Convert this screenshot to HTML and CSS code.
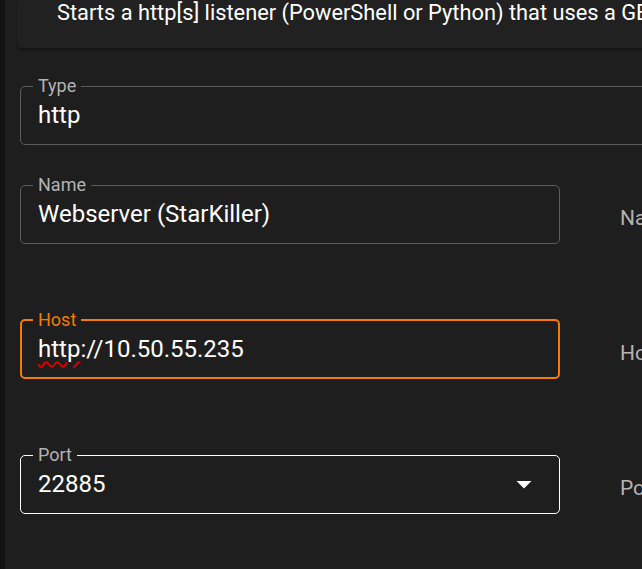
FILE: index.html
```html
<!DOCTYPE html>
<html lang="en">
<head>
<meta charset="utf-8">
<title>Listener</title>
<link rel="stylesheet" href="styles.css">
</head>
<body>
<div class="app">
  <div class="rail"></div>
  <main class="main">
    <div class="card">
      <p class="card-text">Starts a http[s] listener (PowerShell or Python) that uses a GET/POST approach.</p>
    </div>
    <form class="form">
      <fieldset class="field field-wide">
        <legend class="label">Type</legend>
        <div class="value">http</div>
      </fieldset>
      <div class="grid">
        <fieldset class="field">
          <legend class="label">Name</legend>
          <div class="value">Webserver (StarKiller)</div>
        </fieldset>
        <p class="hint">Name for the listener.</p>
        <fieldset class="field field-focus">
          <legend class="label">Host</legend>
          <div class="value"><span class="misspelled">http</span>://10.50.55.235</div>
        </fieldset>
        <p class="hint">Hostname/IP for staging.</p>
        <fieldset class="field field-select">
          <legend class="label">Port</legend>
          <div class="value value-select">
            <span>22885</span>
            <svg class="arrow" viewBox="0 0 24 24" width="36" height="36" aria-hidden="true"><path d="M7 10l5 5 5-5z" fill="#ffffff"/></svg>
          </div>
        </fieldset>
        <p class="hint">Port for the listener.</p>
      </div>
    </form>
  </main>
</div>
</body>
</html>
```
FILE: styles.css
```css
* { box-sizing: border-box; }
html, body {
  margin: 0;
  height: 100%;
}
body {
  background: #1e1e1e;
  color: #ffffff;
  font-family: Roboto, "Liberation Sans", sans-serif;
  overflow: hidden;
}
.app {
  display: flex;
  height: 569px;
}
.rail {
  width: 5px;
  flex: none;
  background: #121212;
}
.main {
  flex: 1;
  min-width: 0;
  overflow: hidden;
}
.card {
  margin-left: 12px;
  width: 900px;
  height: 48px;
  background: #212121;
  border-radius: 0 0 6px 6px;
  box-shadow: 0 2px 3px rgba(0, 0, 0, 0.35);
  padding: 0 0 0 40px;
}
.card-text {
  margin: 0;
  font-size: 21.8px;
  line-height: 26px;
  white-space: nowrap;
  color: #ffffff;
}
.form {
  margin: 29px 0 0 15px;
  width: 900px;
}
.field {
  margin: 0;
  min-width: 0;
  border: 1px solid #5c5c5c;
  border-radius: 5px;
  padding: 0 12px;
}
.field-wide {
  margin-bottom: 31px;
}
.label {
  padding: 0 5px;
  font-size: 18px;
  line-height: 18px;
  color: #b3b3b3;
}
.value {
  padding: 6px 5px 15px;
  font-size: 24px;
  line-height: 28px;
  color: #ffffff;
  white-space: nowrap;
}
.grid {
  display: grid;
  grid-template-columns: 540px 1fr;
  column-gap: 60px;
  row-gap: 67px;
  align-items: center;
}
.hint {
  margin: 0;
  padding-top: 16px;
  font-size: 21px;
  line-height: 28px;
  color: #b3b3b3;
  white-space: nowrap;
}
.field-focus {
  border: 2px solid #f57c00;
  padding: 0 11px;
}
.field-focus .label {
  color: #f57c00;
}
.field-focus .value {
  padding-bottom: 14px;
}
.misspelled {
  text-decoration: underline wavy #e00000;
  text-decoration-thickness: 1.5px;
  text-underline-offset: 4px;
}
.field-select {
  border-color: #ffffff;
}
.value-select {
  display: flex;
  align-items: center;
  justify-content: space-between;
}
.arrow {
  display: block;
  margin: -4px 0 -4px 0;
}
```
